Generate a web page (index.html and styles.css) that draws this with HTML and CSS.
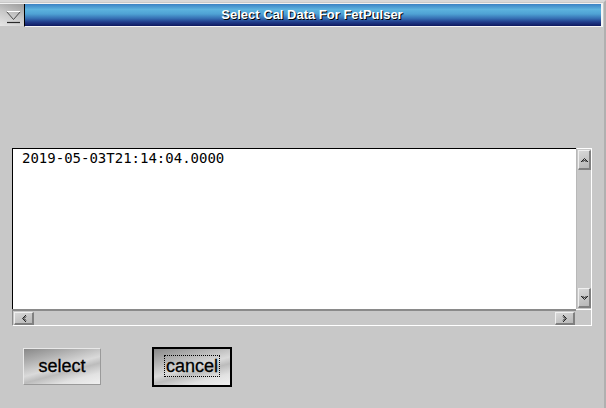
FILE: index.html
```html
<!DOCTYPE html>
<html>
<head>
<meta charset="utf-8">
<link rel="stylesheet" href="styles.css">
</head>
<body>
<div class="window">
  <div class="titlerow">
    <div class="menubtn">
      <svg width="24" height="22" viewBox="0 0 24 22">
        <polygon points="6.5,7.5 20.5,7.5 13.5,15.5" fill="none" stroke="#4a4a4a" stroke-width="1"/>
        <line x1="6.5" y1="7.5" x2="20.5" y2="7.5" stroke="#ffffff" stroke-width="1"/>
        <line x1="7" y1="18.5" x2="20" y2="18.5" stroke="#2a2a2a" stroke-width="1.2"/>
      </svg>
    </div>
    <div class="titlebar">Select Cal Data For FetPulser</div>
  </div>
  <div class="content">
    <div class="listbox">
      <div class="list">
        <div class="item">2019-05-03T21:14:04.0000</div>
      </div>
      <div class="vscroll">
        <div class="sbtn vbtn">
          <svg width="9" height="6" viewBox="0 0 9 6"><path d="M1 5 L4.5 1.5 L8 5 M2.5 5 L4.5 3 L6.5 5" fill="none" stroke="#222" stroke-width="1"/></svg>
        </div>
        <div class="vtrack"></div>
        <div class="sbtn vbtn">
          <svg width="9" height="6" viewBox="0 0 9 6"><path d="M1 1 L4.5 4.5 L8 1 M2.5 1 L4.5 3 L6.5 1" fill="none" stroke="#222" stroke-width="1"/></svg>
        </div>
      </div>
      <div class="hscroll">
        <div class="sbtn hbtn">
          <svg width="6" height="9" viewBox="0 0 6 9"><path d="M5 1 L1.5 4.5 L5 8 M5 2.5 L3 4.5 L5 6.5" fill="none" stroke="#222" stroke-width="1"/></svg>
        </div>
        <div class="htrack"></div>
        <div class="sbtn hbtn">
          <svg width="6" height="9" viewBox="0 0 6 9"><path d="M1 1 L4.5 4.5 L1 8 M1 2.5 L3 4.5 L1 6.5" fill="none" stroke="#222" stroke-width="1"/></svg>
        </div>
      </div>
      <div class="corner"></div>
    </div>
    <div class="buttons">
      <div class="btn select">select</div>
      <div class="btn cancel"><span class="focus">cancel</span></div>
    </div>
  </div>
</div>
</body>
</html>
```

FILE: styles.css
```css
html, body {
  margin: 0;
  padding: 0;
}
body {
  width: 606px;
  height: 408px;
  background: #c8c8c8;
  overflow: hidden;
  font-family: "Liberation Sans", Arial, sans-serif;
}
.window {
  width: 606px;
  height: 408px;
  box-sizing: border-box;
  border-top: 2px solid #d8d8d8;
  border-right: 2px solid #b0b0b0;
}
.titlerow {
  display: flex;
  margin-top: 1px;
  height: 23px;
  border-top: 1px solid #f2f2f2;
  width: 603px;
}
.menubtn {
  width: 24px;
  height: 22px;
  background: linear-gradient(200deg, #9c9c9c 0%, #c8c8c8 50%, #e6e6e6 100%);
}
.menubtn svg {
  display: block;
}
.titlebar {
  flex: 1;
  box-sizing: border-box;
  height: 23px;
  border-left: 1px solid #000;
  border-right: 2px solid #f4f4f4;
  border-bottom: 1px solid #f4f4f4;
  background: linear-gradient(to bottom, #3a82c4 0%, #5cb2de 25%, #4fa2d4 45%, #3670b4 65%, #213c8a 82%, #0f1960 100%);
  color: #fff;
  font-weight: bold;
  font-size: 13px;
  line-height: 21px;
  text-align: center;
  text-shadow: 1px 1px 0 #000;
  padding-right: 2px;
}
.content {
  padding-top: 121px;
}
.listbox {
  margin-left: 12px;
  width: 580px;
  height: 178px;
  display: grid;
  grid-template-columns: 564px 16px;
  grid-template-rows: 161px 17px;
}
.list {
  background: #fff;
  border-top: 1px solid #000;
  border-left: 1px solid #000;
  padding: 1px 0 0 9px;
}
.item {
  font-family: "DejaVu Sans Mono", monospace;
  font-size: 14px;
  line-height: 16px;
  color: #000;
}
.vscroll {
  box-sizing: border-box;
  border-top: 1px solid #fff;
  border-right: 1px solid #fff;
  border-left: 1px solid #b8b8b8;
  padding: 1px 1px 1px 1px;
  display: flex;
  flex-direction: column;
}
.vtrack {
  flex: 1;
}
.sbtn {
  box-sizing: border-box;
  display: flex;
  align-items: center;
  justify-content: center;
  background: linear-gradient(160deg, #d8d8d8 0%, #c4c4c4 60%, #b8b8b8 100%);
  border-top: 1px solid #f0f0f0;
  border-left: 1px solid #f0f0f0;
  border-right: 2px solid #808080;
  border-bottom: 2px solid #808080;
}
.vbtn {
  width: 13px;
  height: 20px;
}
.hscroll {
  box-sizing: border-box;
  border-top: 2px solid #8a8a8a;
  border-left: 1px solid #8a8a8a;
  border-bottom: 1px solid #fff;
  padding: 1px 1px 0 1px;
  display: flex;
  align-items: flex-start;
}
.htrack {
  flex: 1;
}
.hbtn {
  width: 20px;
  height: 13px;
}
.corner {
  box-sizing: border-box;
  border-top: 1px solid #fff;
  border-right: 1px solid #fff;
  border-bottom: 1px solid #fff;
}
.buttons {
  display: flex;
  align-items: flex-start;
  gap: 51px;
  margin-top: 21px;
  padding-left: 23px;
}
.btn {
  box-sizing: border-box;
  display: flex;
  align-items: center;
  justify-content: center;
  font-size: 18px;
  color: #000;
  -webkit-text-stroke: 0.3px #000;
  background: linear-gradient(165deg, #888888 0%, #b0b0b0 25%, #dadada 50%, #bcbcbc 62%, #e2e2e2 80%, #f0f0f0 100%);
}
.select {
  width: 78px;
  height: 37px;
  margin-top: 1px;
  border: 1px solid #e8e8e8;
  border-right-color: #9a9a9a;
  border-bottom-color: #9a9a9a;
}
.cancel {
  width: 80px;
  height: 40px;
  border: 2px solid #000;
}
.focus {
  border: 1px dotted #000;
  padding: 0 1px;
  line-height: 20px;
  margin-top: -2px;
}
```
